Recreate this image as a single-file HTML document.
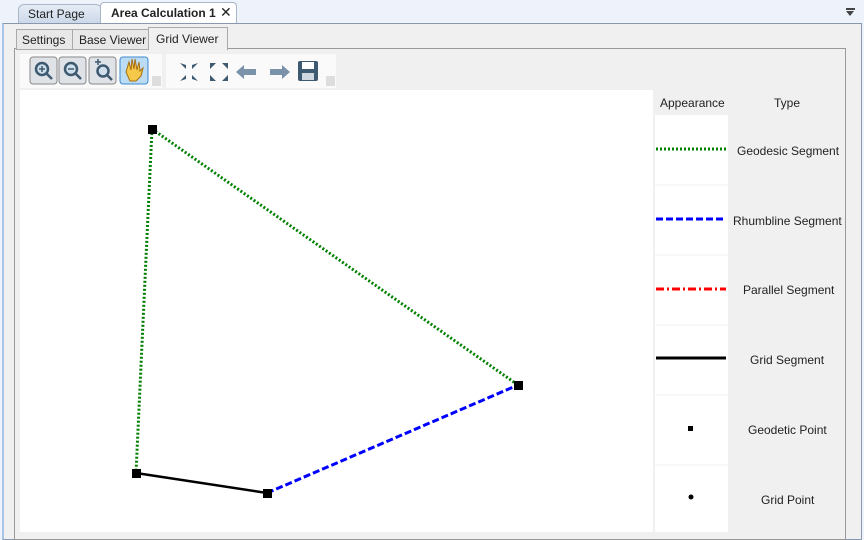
<!DOCTYPE html><html><head><style>
body{margin:0;width:864px;height:536px;overflow:hidden;background:#eef2fa;font-family:"Liberation Sans",sans-serif;font-size:12px;position:relative}
.a{position:absolute}
.t{color:#222;font-size:12px}
</style></head><body>
<div class="a" style="left:18px;top:4px;width:82px;height:20px;background:linear-gradient(#e6ecf5,#c9d6e8);border:1px solid #a9b6c8;border-bottom:none;border-radius:6px 6px 0 0"></div>
<div class="a t" style="left:28px;top:7px">Start Page</div>
<div class="a" style="left:100px;top:2px;width:135px;height:22px;background:#fff;border:1px solid #a9b6c8;border-bottom:none;border-radius:4px 4px 0 0"></div>
<div class="a t" style="left:111px;top:6px;font-weight:bold">Area Calculation 1</div>
<div class="a t" style="left:220px;top:4px;font-size:14px">✕</div>
<div class="a" style="left:846px;top:8px;width:9px;height:2px;background:#444"></div>
<div class="a" style="left:846px;top:11px;width:0;height:0;border-left:4.5px solid transparent;border-right:4.5px solid transparent;border-top:5px solid #444"></div>
<div class="a" style="left:2px;top:23px;width:857px;height:515px;background:#f0f0f0;border:1px solid #8a98ad;border-left:2px solid #a8c4e8"></div>
<div class="a" style="left:14px;top:48px;width:830px;height:490px;background:#f0f0f0;border:1px solid #999"></div>
<div class="a" style="left:16px;top:29px;width:56px;height:19px;background:#e8e8e8;border:1px solid #aaa"></div>
<div class="a t" style="left:22px;top:33px">Settings</div>
<div class="a" style="left:72px;top:29px;width:76px;height:19px;background:#e8e8e8;border:1px solid #aaa"></div>
<div class="a t" style="left:79px;top:33px">Base Viewer</div>
<div class="a" style="left:148px;top:27px;width:78px;height:22px;background:#f0f0f0;border:1px solid #aaa;border-bottom:none"></div>
<div class="a t" style="left:156px;top:32px">Grid Viewer</div>
<div class="a" style="left:20px;top:54px;width:142px;height:34px;background:#fafafa"></div>
<div class="a" style="left:166px;top:54px;width:170px;height:34px;background:#fafafa"></div>
<svg class="a" style="left:0;top:0" width="864" height="100">
<g stroke="#888" fill="#dfe3e8"><rect x="30" y="57" width="27" height="27" rx="3"/><rect x="59" y="57" width="27" height="27" rx="3"/><rect x="89" y="57" width="27" height="27" rx="3"/><rect x="120" y="57" width="28" height="27" rx="3" fill="#bcdcf4" stroke="#3c8ad0"/></g>
<g stroke="#3d5a70" stroke-width="2.5" fill="#cfe0ec"><circle cx="42" cy="69" r="6"/><line x1="46" y1="73" x2="52" y2="79"/><circle cx="71" cy="69" r="6"/><line x1="75" y1="73" x2="81" y2="79"/><circle cx="103" cy="71" r="5.5"/><line x1="107" y1="75" x2="112" y2="80"/></g>
<path d="M39 69h6M42 66v6M68 69h6M95 62h6M98 59v6" stroke="#3d5a70" stroke-width="1.5"/>
<path d="M126 72l3-10 2 8 1-11 2 10 1-10 2 11 2-8 1 9 3-3-2 8-5 5h-6z" fill="#f6c84a" stroke="#a86e10"/>
<rect x="152" y="76" width="9" height="10" fill="#ddd"/><rect x="326" y="76" width="9" height="10" fill="#ddd"/>
<g fill="#3d5a70"><path d="M180 63l6 6v-4zM198 63l-6 6v-4zM180 81l6-6v4zM198 81l-6-6v4z"/><path d="M210 63l6 0-6 6zM228 63l-6 0 6 6zM210 81l6 0-6-6zM228 81l-6 0 6-6z"/>
<path d="M236 72l8-7v4h12v6h-12v4z" fill="#7a93a8"/><path d="M290 72l-8-7v4h-12v6h12v4z" fill="#7a93a8"/>
<rect x="298" y="61" width="20" height="20" rx="2"/></g>
<rect x="302" y="62" width="12" height="7" fill="#fff"/><rect x="302" y="73" width="12" height="7" fill="#cfd8e0"/>
</svg>
<div class="a" style="left:20px;top:90px;width:633px;height:442px;background:#fff"></div>
<div class="a" style="left:655px;top:115px;width:73px;height:417px;background:#fff"></div>
<div class="a t" style="left:660px;top:96px">Appearance</div>
<div class="a t" style="left:774px;top:96px">Type</div>
<div class="a t" style="left:737px;top:144px">Geodesic Segment</div>
<div class="a t" style="left:733px;top:214px">Rhumbline Segment</div>
<div class="a t" style="left:743px;top:283px">Parallel Segment</div>
<div class="a t" style="left:750px;top:353px">Grid Segment</div>
<div class="a t" style="left:748px;top:423px">Geodetic Point</div>
<div class="a t" style="left:761px;top:493px">Grid Point</div>
<div class="a" style="left:845px;top:90px;width:1px;height:446px;background:#999"></div>
<svg class="a" style="left:0;top:0" width="864" height="536">
<g stroke="#f2f2f2"><line x1="655" y1="185" x2="728" y2="185"/><line x1="655" y1="255" x2="728" y2="255"/><line x1="655" y1="325" x2="728" y2="325"/><line x1="655" y1="395" x2="728" y2="395"/><line x1="655" y1="465" x2="728" y2="465"/></g>
<line x1="656" y1="149" x2="726" y2="149" stroke="#008000" stroke-width="3" stroke-dasharray="2 2"/>
<line x1="656" y1="219" x2="726" y2="219" stroke="#0000ff" stroke-width="3" stroke-dasharray="7 3"/>
<line x1="656" y1="289" x2="726" y2="289" stroke="#ff0000" stroke-width="3" stroke-dasharray="8 3 2 3"/>
<line x1="656" y1="358" x2="726" y2="358" stroke="#000" stroke-width="3"/>
<rect x="688" y="426" width="5" height="5"/><circle cx="691" cy="497" r="2.5"/>
<polyline points="152,129 518,385" stroke="#008000" stroke-width="3" stroke-dasharray="2 2" fill="none"/>
<polyline points="152,129 136,473" stroke="#008000" stroke-width="3" stroke-dasharray="2 2" fill="none"/>
<line x1="267" y1="493" x2="518" y2="385" stroke="#0000ff" stroke-width="3" stroke-dasharray="7 3"/>
<line x1="136" y1="473" x2="267" y2="493" stroke="#000" stroke-width="2.5"/>
<rect x="148" y="125" width="9" height="9"/><rect x="514" y="381" width="9" height="9"/><rect x="132" y="469" width="9" height="9"/><rect x="263" y="489" width="9" height="9"/>
</svg>
</body></html>
